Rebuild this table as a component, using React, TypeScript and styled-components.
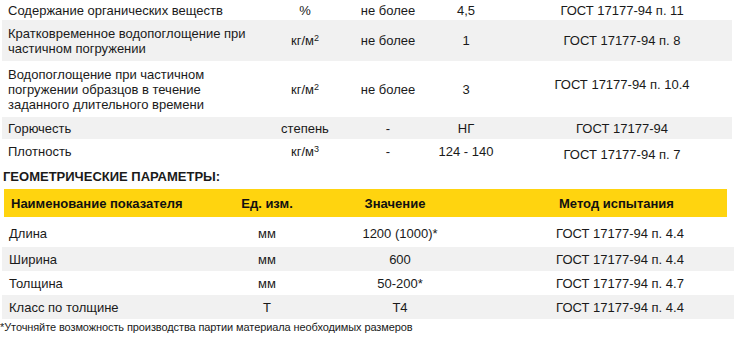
import React from "react";
import styled, { createGlobalStyle } from "styled-components";

const GlobalStyle = createGlobalStyle`
  html, body {
    margin: 0;
    padding: 0;
    background: #ffffff;
  }
  body {
    font-family: "Liberation Sans", Arial, sans-serif;
    font-size: 13px;
    color: #1a1a1a;
  }
`;

const Page = styled.div`
  width: 736px;
  height: 352px;
  overflow: hidden;
  padding-left: 2px;
  box-sizing: border-box;
`;

const PropsTable = styled.div`
  width: 730px;
  display: flex;
  flex-direction: column;
`;

const PropsRow = styled.div<{ $h: number; $alt?: boolean }>`
  display: grid;
  grid-template-columns: 268px 70px 96px 60px 236px;
  align-items: center;
  height: ${(p) => p.$h}px;
  background: ${(p) => (p.$alt ? "#f1f1f1" : "#ffffff")};
  line-height: 15px;
`;

const NameCell = styled.div<{ $pl?: number }>`
  padding-left: ${(p) => p.$pl ?? 6}px;
  text-align: left;
`;

// $lift > 0 raises the text a little, < 0 lowers it (done with padding)
const Cell = styled.div<{ $pl?: number; $lift?: number }>`
  text-align: center;
  padding-left: ${(p) => p.$pl ?? 0}px;
  padding-bottom: ${(p) => Math.max(0, (p.$lift ?? 0) * 2)}px;
  padding-top: ${(p) => Math.max(0, -(p.$lift ?? 0) * 2)}px;
`;

const Heading = styled.div`
  font-weight: 700;
  font-size: 13px;
  padding-left: 1px;
  height: 26px;
  line-height: 28px;
  text-transform: uppercase;
`;

const GeoTable = styled.div`
  width: 732px;
  display: flex;
  flex-direction: column;
`;

const HeadRow = styled.div`
  display: grid;
  grid-template-columns: 216px 94px 172px 241px;
  align-items: center;
  height: 28px;
  margin: 0 7px 0 2px;
  background: #ffd40f;
  font-weight: 700;
  color: #111111;
`;

const HeadCell = styled.div<{ $left?: boolean; $pl?: number; $pr?: number }>`
  text-align: ${(p) => (p.$left ? "left" : "center")};
  padding-left: ${(p) => p.$pl ?? 0}px;
  padding-right: ${(p) => p.$pr ?? 0}px;
`;

const GeoRow = styled.div<{ $h: number; $alt?: boolean }>`
  display: grid;
  grid-template-columns: 218px 94px 172px 248px;
  align-items: center;
  height: ${(p) => p.$h}px;
  background: ${(p) => (p.$alt ? "#f1f1f1" : "#ffffff")};
  padding-top: ${(p) => (p.$h > 26 ? 3 : 0)}px;
  box-sizing: border-box;
`;

const Footnote = styled.div`
  font-size: 11px;
  margin-left: -2px;
  padding-top: 2px;
  letter-spacing: -0.1px;
`;

const Sup = styled.sup`
  font-size: 9px;
  line-height: 0;
  vertical-align: 4px;
`;

type PropRow = {
  name: React.ReactNode;
  unit: React.ReactNode;
  limit: string;
  value: string;
  method: string;
  h: number;
  alt?: boolean;
  methodLift?: number;
};

const kgm2 = (
  <>
    кг/м<Sup>2</Sup>
  </>
);

const props: PropRow[] = [
  {
    name: "Содержание органических веществ",
    unit: "%",
    limit: "не более",
    value: "4,5",
    method: "ГОСТ 17177-94 п. 11",
    h: 20,
  },
  {
    name: (
      <>
        Кратковременное водопоглощение при
        <br />
        частичном погружении
      </>
    ),
    unit: kgm2,
    limit: "не более",
    value: "1",
    method: "ГОСТ 17177-94 п. 8",
    h: 41,
    alt: true,
  },
  {
    name: (
      <>
        Водопоглощение при частичном
        <br />
        погружении образцов в течение
        <br />
        заданного длительного времени
      </>
    ),
    unit: kgm2,
    limit: "не более",
    value: "3",
    method: "ГОСТ 17177-94 п. 10.4",
    h: 56,
    methodLift: 5,
  },
  {
    name: "Горючесть",
    unit: "степень",
    limit: "-",
    value: "НГ",
    method: "ГОСТ 17177-94",
    h: 22,
    alt: true,
  },
  {
    name: "Плотность",
    unit: (
      <>
        кг/м<Sup>3</Sup>
      </>
    ),
    limit: "-",
    value: "124 - 140",
    method: "ГОСТ 17177-94 п. 7",
    h: 24,
    methodLift: -3,
  },
];

const geo = [
  { name: "Длина", unit: "мм", value: "1200 (1000)*", method: "ГОСТ 17177-94 п. 4.4", h: 30 },
  { name: "Ширина", unit: "мм", value: "600", method: "ГОСТ 17177-94 п. 4.4", h: 24, alt: true },
  { name: "Толщина", unit: "мм", value: "50-200*", method: "ГОСТ 17177-94 п. 4.7", h: 24 },
  { name: "Класс по толщине", unit: "Т", value: "Т4", method: "ГОСТ 17177-94 п. 4.4", h: 24, alt: true },
];

export default function App() {
  return (
    <>
      <GlobalStyle />
      <Page>
        <PropsTable>
          {props.map((r, i) => (
            <PropsRow key={i} $h={r.h} $alt={r.alt}>
              <NameCell>{r.name}</NameCell>
              <Cell>{r.unit}</Cell>
              <Cell>{r.limit}</Cell>
              <Cell>{r.value}</Cell>
              <Cell $pl={16} $lift={r.methodLift}>
                {r.method}
              </Cell>
            </PropsRow>
          ))}
        </PropsTable>

        <Heading>Геометрические параметры:</Heading>

        <GeoTable>
          <HeadRow>
            <HeadCell $left $pl={7}>
              Наименование показателя
            </HeadCell>
            <HeadCell>Ед. изм.</HeadCell>
            <HeadCell $pr={10}>Значение</HeadCell>
            <HeadCell $pl={20}>Метод испытания</HeadCell>
          </HeadRow>
          {geo.map((r, i) => (
            <GeoRow key={i} $h={r.h} $alt={r.alt}>
              <NameCell $pl={7}>{r.name}</NameCell>
              <Cell>{r.unit}</Cell>
              <Cell>{r.value}</Cell>
              <Cell $pl={20}>{r.method}</Cell>
            </GeoRow>
          ))}
        </GeoTable>

        <Footnote>
          *Уточняйте возможность производства партии материала необходимых
          размеров
        </Footnote>
      </Page>
    </>
  );
}
